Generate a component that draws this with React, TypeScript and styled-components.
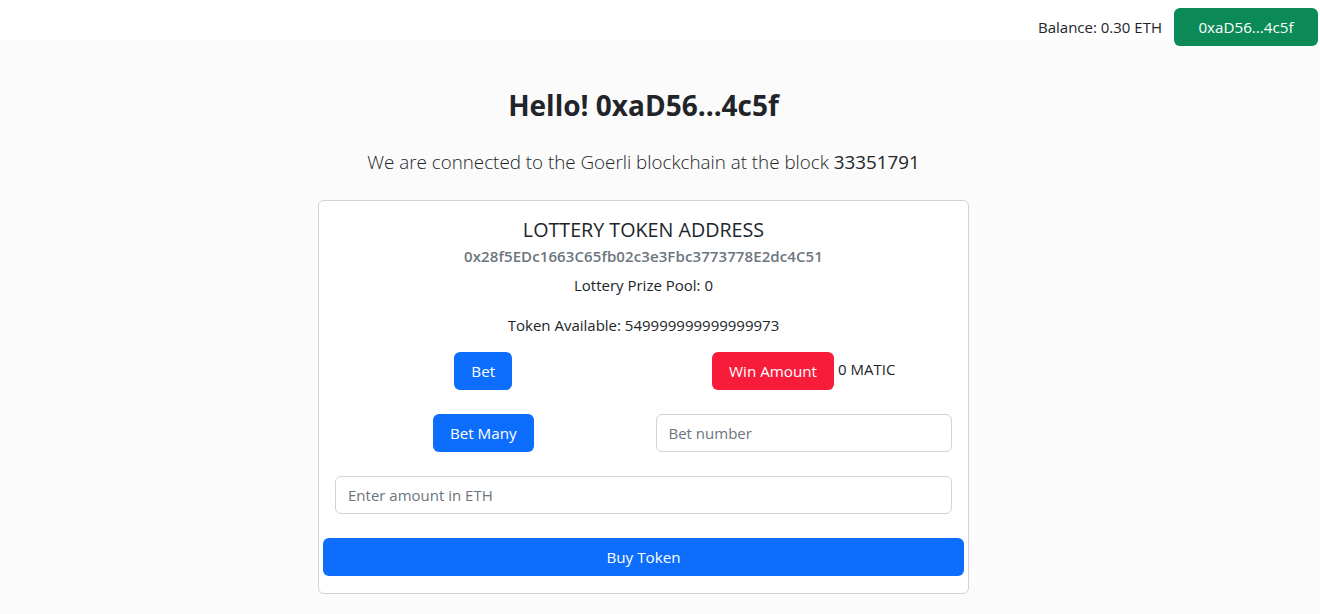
import React from "react";
import styled, { createGlobalStyle } from "styled-components";

const Global = createGlobalStyle`
  html, body { margin: 0; padding: 0; }
  body {
    font-family: "Open Sans", "Noto Sans", sans-serif;
    color: #212529;
    background: #fbfbfb;
  }
  * { box-sizing: border-box; }
`;

const Nav = styled.header`
  height: 40px;
  background: #ffffff;
  display: flex;
  justify-content: flex-end;
  align-items: flex-start;
  padding: 8px 2px 0 0;
  gap: 12px;
`;

const Balance = styled.span`
  font-size: 15px;
  line-height: 38px;
  color: #212529;
`;

const Button = styled.button<{ $variant?: "primary" | "danger" | "success"; $w?: string }>`
  font-family: inherit;
  font-size: 15.2px;
  height: 38px;
  padding: 0 17px;
  border: none;
  border-radius: 6px;
  color: #fff;
  cursor: pointer;
  background: ${(p) =>
    p.$variant === "danger" ? "#f81c3b" : p.$variant === "success" ? "#0b8a58" : "#0d6efd"};
  width: ${(p) => p.$w || "auto"};
`;

const Main = styled.main`
  display: flex;
  flex-direction: column;
  align-items: center;
  padding: 46px 33px 20px 0;
`;

const Title = styled.h1`
  margin: 0;
  font-size: 28px;
  font-weight: 700;
  line-height: 38px;
`;

const Lead = styled.p`
  margin: 23px 0 0;
  font-size: 18.8px;
  font-weight: 300;
  line-height: 30px;
  color: #212529;
`;

const Number = styled.span`
  font-weight: 400;
`;

const Card = styled.section`
  margin-top: 23px;
  width: 651px;
  background: #fff;
  border: 1px solid #d3d3d3;
  border-radius: 6px;
  display: flex;
  flex-direction: column;
  align-items: center;
  padding: 16px 4px 17px;
`;

const CardTitle = styled.h2`
  margin: 0;
  font-size: 19.7px;
  font-weight: 500;
  line-height: 26px;
`;

const Address = styled.div`
  margin-top: 2px;
  font-size: 15px;
  font-weight: 600;
  letter-spacing: 0.1px;
  color: #6c757d;
  line-height: 22px;
`;

const Info = styled.p<{ $mt: number }>`
  margin: ${(p) => p.$mt}px 0 0;
  font-size: 15px;
  line-height: 22px;
`;

const Grid = styled.div`
  align-self: stretch;
  margin: 16px 12px 0;
  display: grid;
  grid-template-columns: 1fr 1fr;
  column-gap: 24px;
  row-gap: 24px;
`;

const Cell = styled.div`
  display: flex;
  justify-content: center;
  align-items: flex-start;
  gap: 4px;
`;

const Unit = styled.span`
  font-size: 15px;
  line-height: 34px;
`;

const Input = styled.input`
  width: 100%;
  height: 38px;
  border: 1px solid #ced4da;
  border-radius: 6px;
  padding: 0 12px;
  font-family: inherit;
  font-size: 15px;
  color: #212529;
  background: #fff;
  &::placeholder { color: #6c757d; }
`;

const FullRow = styled.div`
  align-self: stretch;
  margin: 24px 12px 0;
`;

const BuyRow = styled.div`
  align-self: stretch;
  margin-top: 24px;
  display: flex;
`;

export default function App() {
  return (
    <>
      <Global />
      <Nav>
        <Balance>Balance: 0.30 ETH</Balance>
        <Button $variant="success" $w="144px">0xaD56...4c5f</Button>
      </Nav>
      <Main>
        <Title>Hello! 0xaD56...4c5f</Title>
        <Lead>
          We are connected to the Goerli blockchain at the block <Number>33351791</Number>
        </Lead>
        <Card>
          <CardTitle>LOTTERY TOKEN ADDRESS</CardTitle>
          <Address>0x28f5EDc1663C65fb02c3e3Fbc3773778E2dc4C51</Address>
          <Info $mt={7}>Lottery Prize Pool: 0</Info>
          <Info $mt={18}>Token Available: 549999999999999973</Info>
          <Grid>
            <Cell>
              <Button>Bet</Button>
            </Cell>
            <Cell>
              <Button $variant="danger">Win Amount</Button>
              <Unit>0 MATIC</Unit>
            </Cell>
            <Cell>
              <Button>Bet Many</Button>
            </Cell>
            <Cell>
              <Input placeholder="Bet number" />
            </Cell>
          </Grid>
          <FullRow>
            <Input placeholder="Enter amount in ETH" />
          </FullRow>
          <BuyRow>
            <Button $w="100%">Buy Token</Button>
          </BuyRow>
        </Card>
      </Main>
    </>
  );
}
